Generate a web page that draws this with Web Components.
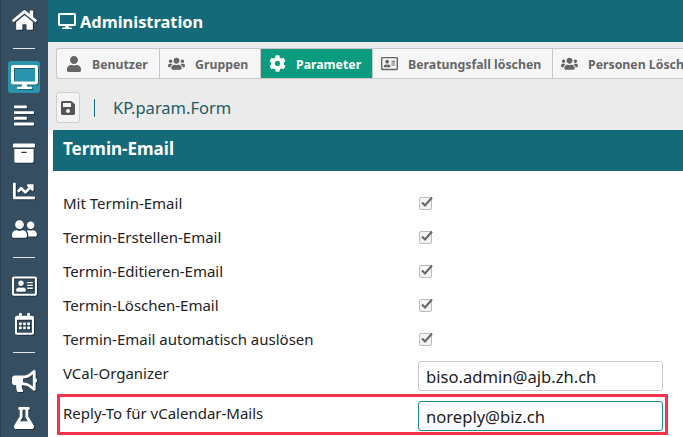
<!DOCTYPE html>
<html lang="de">
<head>
<meta charset="utf-8">
<title>Administration</title>
<style>
  html, body { margin: 0; height: 100%; overflow: hidden; background: #fff; }
  body { font-family: "Noto Sans", "Open Sans", sans-serif; }
</style>
</head>
<body>
<app-shell>
  <side-bar slot="side">
    <side-icon name="home" size="25" h="40"></side-icon>
    <side-sep style="margin-top: 8px"></side-sep>
    <side-icon name="desktop" size="27" h="32" active></side-icon>
    <side-icon name="align" size="20" h="44"></side-icon>
    <side-icon name="archive" size="22" h="32"></side-icon>
    <side-icon name="chart" size="22" h="43"></side-icon>
    <side-icon name="friends" size="25" h="33"></side-icon>
    <side-sep style="margin-top: 12px"></side-sep>
    <side-icon name="card" size="25" h="32"></side-icon>
    <side-icon name="calendar" size="19" h="44"></side-icon>
    <side-sep style="margin-top: 6px"></side-sep>
    <side-icon name="bullhorn" size="25" h="32"></side-icon>
    <side-icon name="flask" size="20" h="42"></side-icon>
  </side-bar>

  <top-head>Administration</top-head>

  <tab-bar>
    <tab-item icon="user" w="103">Benutzer</tab-item>
    <tab-item icon="users" w="101">Gruppen</tab-item>
    <tab-item icon="cog" w="112" active>Parameter</tab-item>
    <tab-item icon="card" w="180">Beratungsfall löschen</tab-item>
    <tab-item icon="users" w="180">Personen Löschen</tab-item>
  </tab-bar>

  <form-tools>KP.param.Form</form-tools>

  <form-section title="Termin-Email">
    <form-row label="Mit Termin-Email" checked></form-row>
    <form-row label="Termin-Erstellen-Email" checked></form-row>
    <form-row label="Termin-Editieren-Email" checked></form-row>
    <form-row label="Termin-Löschen-Email" checked></form-row>
    <form-row label="Termin-Email automatisch auslösen" checked></form-row>
    <form-row label="VCal-Organizer" value="biso.admin@ajb.zh.ch"></form-row>
    <form-row label="Reply-To für vCalendar-Mails" value="noreply@biz.ch" marked></form-row>
  </form-section>
</app-shell>

<script>
const ICONS = {
  home: [576, 'M280.37 148.26L96 300.11V464a16 16 0 0 0 16 16l112.06-.29a16 16 0 0 0 15.92-16V368a16 16 0 0 1 16-16h64a16 16 0 0 1 16 16v95.64a16 16 0 0 0 16 16.05L464 480a16 16 0 0 0 16-16V300L295.67 148.26a12.19 12.19 0 0 0-15.3 0zM571.6 251.47L488 182.56V44.05a12 12 0 0 0-12-12h-56a12 12 0 0 0-12 12v72.61L318.47 43a48 48 0 0 0-61 0L4.34 251.47a12 12 0 0 0-1.6 16.9l25.5 31A12 12 0 0 0 45.15 301l235.22-193.74a12.19 12.19 0 0 1 15.3 0L530.9 301a12 12 0 0 0 16.9-1.6l25.5-31a12 12 0 0 0-1.7-16.93z'],
  desktop: [576, 'M528 0H48C21.5 0 0 21.5 0 48v320c0 26.5 21.5 48 48 48h192l-16 48h-72c-13.3 0-24 10.7-24 24s10.7 24 24 24h272c13.3 0 24-10.7 24-24s-10.7-24-24-24h-72l-16-48h192c26.5 0 48-21.5 48-48V48c0-26.5-21.5-48-48-48zm-16 352H64V64h448v288z'],
  align: [448, 'M12.83 352h262.34A12.82 12.82 0 0 0 288 339.17v-38.34A12.82 12.82 0 0 0 275.17 288H12.83A12.82 12.82 0 0 0 0 300.83v38.34A12.82 12.82 0 0 0 12.83 352zm0-256h262.34A12.82 12.82 0 0 0 288 83.17V44.83A12.82 12.82 0 0 0 275.17 32H12.83A12.82 12.82 0 0 0 0 44.83v38.34A12.82 12.82 0 0 0 12.83 96zM432 160H16a16 16 0 0 0-16 16v32a16 16 0 0 0 16 16h416a16 16 0 0 0 16-16v-32a16 16 0 0 0-16-16zm0 256H16a16 16 0 0 0-16 16v32a16 16 0 0 0 16 16h416a16 16 0 0 0 16-16v-32a16 16 0 0 0-16-16z'],
  archive: [512, 'M32 448c0 17.7 14.3 32 32 32h384c17.7 0 32-14.3 32-32V160H32v288zm160-212c0-6.6 5.4-12 12-12h104c6.6 0 12 5.4 12 12v8c0 6.6-5.4 12-12 12H204c-6.6 0-12-5.4-12-12v-8zM480 32H32C14.3 32 0 46.3 0 64v48c0 8.8 7.2 16 16 16h480c8.8 0 16-7.2 16-16V64c0-17.7-14.3-32-32-32z'],
  chart: [512, 'M496 384H64V80c0-8.84-7.16-16-16-16H16C7.16 64 0 71.16 0 80v336c0 17.67 14.33 32 32 32h464c8.84 0 16-7.16 16-16v-32c0-8.84-7.16-16-16-16zM464 96H345.94c-21.38 0-32.09 25.85-16.97 40.97l32.4 32.4L288 242.75l-73.37-73.37c-12.5-12.5-32.76-12.5-45.25 0l-68.69 68.69c-6.25 6.25-6.25 16.38 0 22.63l22.62 22.62c6.25 6.25 16.38 6.25 22.63 0L192 237.25l73.37 73.37c12.5 12.5 32.76 12.5 45.25 0l96-96 32.4 32.4c15.12 15.12 40.97 4.41 40.97-16.97V112c.01-8.84-7.15-16-15.99-16z'],
  friends: [640, 'M192 256c61.9 0 112-50.1 112-112S253.9 32 192 32 80 82.1 80 144s50.1 112 112 112zm76.8 32h-8.3c-20.8 10-43.9 16-68.5 16s-47.6-6-68.5-16h-8.3C51.6 288 0 339.6 0 403.2V432c0 26.5 21.5 48 48 48h288c26.5 0 48-21.5 48-48v-28.8c0-63.6-51.6-115.2-115.2-115.2zM480 256c53 0 96-43 96-96s-43-96-96-96-96 43-96 96 43 96 96 96zm48 32h-3.8c-13.9 4.8-28.6 8-44.2 8s-30.3-3.2-44.2-8H432c-20.4 0-39.2 5.9-55.7 15.4 24.4 26.3 39.7 61.2 39.7 99.8v38.4c0 2.2-.5 4.3-.6 6.4H592c26.5 0 48-21.5 48-48 0-61.9-50.1-112-112-112z'],
  card: [576, 'M528 32H48C21.5 32 0 53.5 0 80v352c0 26.5 21.5 48 48 48h480c26.5 0 48-21.5 48-48V80c0-26.5-21.5-48-48-48zm-6 400H54c-3.3 0-6-2.7-6-6V86c0-3.3 2.7-6 6-6h468c3.3 0 6 2.7 6 6v340c0 3.3-2.7 6-6 6zM208 256c35.3 0 64-28.7 64-64s-28.7-64-64-64-64 28.7-64 64 28.7 64 64 64zm-89.6 128h179.2c12.4 0 22.4-8.6 22.4-19.2v-19.2c0-31.8-30.1-57.6-67.2-57.6-10.8 0-18.7 8-44.8 8-26.9 0-33.4-8-44.8-8-37.1 0-67.2 25.8-67.2 57.6v19.2c0 10.6 10 19.2 22.4 19.2zM360 320h112c4.4 0 8-3.6 8-8v-16c0-4.4-3.6-8-8-8H360c-4.4 0-8 3.6-8 8v16c0 4.4 3.6 8 8 8zm0-64h112c4.4 0 8-3.6 8-8v-16c0-4.4-3.6-8-8-8H360c-4.4 0-8 3.6-8 8v16c0 4.4 3.6 8 8 8zm0-64h112c4.4 0 8-3.6 8-8v-16c0-4.4-3.6-8-8-8H360c-4.4 0-8 3.6-8 8v16c0 4.4 3.6 8 8 8z'],
  calendar: [448, 'M148 288h-40c-6.6 0-12-5.4-12-12v-40c0-6.6 5.4-12 12-12h40c6.6 0 12 5.4 12 12v40c0 6.6-5.4 12-12 12zm108-12v-40c0-6.6-5.4-12-12-12h-40c-6.6 0-12 5.4-12 12v40c0 6.6 5.4 12 12 12h40c6.6 0 12-5.4 12-12zm96 0v-40c0-6.6-5.4-12-12-12h-40c-6.6 0-12 5.4-12 12v40c0 6.6 5.4 12 12 12h40c6.6 0 12-5.4 12-12zm-96 96v-40c0-6.6-5.4-12-12-12h-40c-6.6 0-12 5.4-12 12v40c0 6.6 5.4 12 12 12h40c6.6 0 12-5.4 12-12zm-96 0v-40c0-6.6-5.4-12-12-12h-40c-6.6 0-12 5.4-12 12v40c0 6.6 5.4 12 12 12h40c6.6 0 12-5.4 12-12zm192 0v-40c0-6.6-5.4-12-12-12h-40c-6.6 0-12 5.4-12 12v40c0 6.6 5.4 12 12 12h40c6.6 0 12-5.4 12-12zm96-260v352c0 26.5-21.5 48-48 48H48c-26.5 0-48-21.5-48-48V112c0-26.5 21.5-48 48-48h48V12c0-6.6 5.4-12 12-12h40c6.6 0 12 5.4 12 12v52h128V12c0-6.6 5.4-12 12-12h40c6.6 0 12 5.4 12 12v52h48c26.5 0 48 21.5 48 48zm-48 346V160H48v298c0 3.3 2.7 6 6 6h340c3.3 0 6-2.7 6-6z'],
  bullhorn: [576, 'M576 240c0-23.63-12.95-44.04-32-55.12V32.01C544 23.26 537.02 0 512 0c-7.12 0-14.19 2.38-19.98 7.02l-85.03 68.03C364.28 109.19 310.66 128 256 128H64c-35.35 0-64 28.65-64 64v96c0 35.35 28.65 64 64 64h33.7c-1.39 10.48-2.18 21.14-2.18 32 0 39.77 9.26 77.35 25.56 110.94 5.19 10.69 16.52 17.06 28.4 17.06h74.28c26.05 0 41.69-29.84 25.9-50.56-16.4-21.52-26.15-48.36-26.15-77.44 0-11.11 1.62-21.79 4.41-32H256c54.66 0 108.28 18.81 150.98 52.95l85.03 68.03a32.023 32.023 0 0 0 19.98 7.02c24.92 0 32-22.78 32-32V295.13C563.05 284.04 576 263.63 576 240zm-96 141.42l-33.05-26.44C392.95 311.78 325.12 288 256 288V192c69.12 0 136.95-23.78 190.95-66.98L480 98.58v282.84z'],
  flask: [448, 'M437.2 403.5L320 215V64h8c13.3 0 24-10.7 24-24V24c0-13.3-10.7-24-24-24H120c-13.3 0-24 10.7-24 24v16c0 13.3 10.7 24 24 24h8v151L10.8 403.5C-18.5 450.6 15.3 512 70.9 512h306.2c55.7 0 89.4-61.5 60.1-108.5zM137.9 320l48.2-77.6c3.7-5.2 5.8-11.6 5.8-18.4V64h64v160c0 6.9 2.2 13.2 5.8 18.4l48.2 77.6h-172z'],
  user: [448, 'M224 256c70.7 0 128-57.3 128-128S294.7 0 224 0 96 57.3 96 128s57.3 128 128 128zm89.6 32h-16.7c-22.2 10.2-46.9 16-72.9 16s-50.6-5.8-72.9-16h-16.7C60.2 288 0 348.2 0 422.4V464c0 26.5 21.5 48 48 48h352c26.5 0 48-21.5 48-48v-41.6c0-74.2-60.2-134.4-134.4-134.4z'],
  users: [640, 'M96 224c35.3 0 64-28.7 64-64s-28.7-64-64-64-64 28.7-64 64 28.7 64 64 64zm448 0c35.3 0 64-28.7 64-64s-28.7-64-64-64-64 28.7-64 64 28.7 64 64 64zm32 32h-64c-17.6 0-33.5 7.1-45.1 18.6 40.3 22.1 68.9 62 75.1 109.4h66c17.7 0 32-14.3 32-32v-32c0-35.3-28.7-64-64-64zm-256 0c61.9 0 112-50.1 112-112S381.9 32 320 32 208 82.1 208 144s50.1 112 112 112zm76.8 32h-8.3c-20.8 10-43.9 16-68.5 16s-47.6-6-68.5-16h-8.3C179.6 288 128 339.6 128 403.2V432c0 26.5 21.5 48 48 48h288c26.5 0 48-21.5 48-48v-28.8c0-63.6-51.6-115.2-115.2-115.2zm-223.7-13.4C161.5 263.1 145.6 256 128 256H64c-35.3 0-64 28.7-64 64v32c0 17.7 14.3 32 32 32h65.9c6.3-47.4 34.9-87.3 75.2-109.4z'],
  cog: [512, 'M487.4 315.7l-42.6-24.6c4.3-23.2 4.3-47 0-70.2l42.6-24.6c4.9-2.8 7.1-8.6 5.5-14-11.1-35.6-30-67.8-54.7-94.6-3.8-4.1-10-5.1-14.8-2.3L380.8 110c-17.9-15.4-38.5-27.3-60.8-35.1V25.8c0-5.6-3.9-10.5-9.4-11.7-36.7-8.2-74.3-7.8-109.2 0-5.5 1.2-9.4 6.1-9.4 11.7V75c-22.2 7.9-42.8 19.8-60.8 35.1L88.7 85.5c-4.9-2.8-11-1.9-14.8 2.3-24.7 26.7-43.6 58.9-54.7 94.6-1.7 5.4.6 11.2 5.5 14L67.3 221c-4.3 23.2-4.3 47 0 70.2l-42.6 24.6c-4.9 2.8-7.1 8.6-5.5 14 11.1 35.6 30 67.8 54.7 94.6 3.8 4.1 10 5.1 14.8 2.3l42.6-24.6c17.9 15.4 38.5 27.3 60.8 35.1v49.2c0 5.6 3.9 10.5 9.4 11.7 36.7 8.2 74.3 7.8 109.2 0 5.5-1.2 9.4-6.1 9.4-11.7v-49.2c22.2-7.9 42.8-19.8 60.8-35.1l42.6 24.6c4.9 2.8 11 1.9 14.8-2.3 24.7-26.7 43.6-58.9 54.7-94.6 1.5-5.5-.7-11.3-5.6-14.1zM256 336c-44.1 0-80-35.9-80-80s35.9-80 80-80 80 35.9 80 80-35.9 80-80 80z'],
  save: [448, 'M433.941 129.941l-83.882-83.882A48 48 0 0 0 316.118 32H48C21.49 32 0 53.49 0 80v352c0 26.51 21.49 48 48 48h352c26.51 0 48-21.49 48-48V163.882a48 48 0 0 0-14.059-33.941zM224 416c-35.346 0-64-28.654-64-64 0-35.346 28.654-64 64-64s64 28.654 64 64c0 35.346-28.654 64-64 64zm96-304.52V212c0 6.627-5.373 12-12 12H76c-6.627 0-12-5.373-12-12V108c0-6.627 5.373-12 12-12h228.52c3.183 0 6.235 1.264 8.485 3.515l3.48 3.48A11.996 11.996 0 0 1 320 111.48z']
};

function svgIcon(name, size) {
  const [w, d] = ICONS[name];
  return `<svg width="${size}" height="${size * 512 / w}" viewBox="0 0 ${w} 512" fill="currentColor"><path d="${d}"/></svg>`;
}

class Base extends HTMLElement {
  constructor(html) {
    super();
    this.attachShadow({ mode: 'open' });
    if (html) this.shadowRoot.innerHTML = html;
  }
}

class AppShell extends Base {
  constructor() {
    super(`<style>
      :host { display: grid; grid-template-columns: 48px 1fr; width: 683px; height: 437px; overflow: hidden; }
      main { display: flex; flex-direction: column; min-width: 0; height: 437px; overflow: hidden; }
    </style>
    <div><slot name="side"></slot></div>
    <main><slot></slot></main>`);
  }
}

class SideBar extends Base {
  constructor() {
    super(`<style>
      :host { display: flex; flex-direction: column; align-items: center; box-sizing: border-box;
        width: 48px; height: 437px; background: #354e62; border-left: 1px solid #2c4253; }
    </style><slot></slot>`);
  }
}

class SideIcon extends Base {
  connectedCallback() {
    const size = +this.getAttribute('size');
    const h = this.getAttribute('h');
    this.shadowRoot.innerHTML = `<style>
      :host { display: flex; flex: none; align-items: center; justify-content: center; height: ${h}px; width: 32px;
        margin-left: -1px; color: #fff; border-radius: 3px; }
      :host([active]) { background: #2a93ad; }
      svg { display: block; filter: drop-shadow(1px 1px 0 rgba(0,0,0,.35)); }
    </style>${svgIcon(this.getAttribute('name'), size)}`;
  }
}

class SideSep extends Base {
  constructor() {
    super(`<style>
      :host { display: block; flex: none; width: 22px; height: 1px; background: #dfe5ea; margin: 0 0 12px -1px; }
    </style>`);
  }
}

class TopHead extends Base {
  constructor() {
    super(`<style>
      :host { display: flex; flex: none; align-items: center; gap: 4px; height: 42px; box-sizing: border-box;
        padding: 0 0 0 10px; background: #146a79; color: #fff; font-size: 16.4px; font-weight: 700; }
      svg { display: block; }
    </style>${svgIcon('desktop', 18)}<slot></slot>`);
  }
}

class TabBar extends Base {
  constructor() {
    super(`<style>
      :host { display: flex; flex: none; box-sizing: border-box; background: #ebebeb; padding: 6px 0 0 8px; height: 37px; overflow: hidden; }
      .wrap { display: flex; flex: none; height: 31px; box-sizing: border-box; border: 1px solid #c8c8c8;
        border-right: 0; border-radius: 3px 0 0 3px; background: #f6f6f6; }
    </style><div class="wrap"><slot></slot></div>`);
  }
}

class TabItem extends Base {
  connectedCallback() {
    this.shadowRoot.innerHTML = `<style>
      :host { display: flex; flex: none; align-items: center; box-sizing: border-box; width: ${this.getAttribute('w')}px;
        border-right: 1px solid #c8c8c8; color: #666; font-size: 12.3px; font-weight: 700; white-space: nowrap; }
      :host([active]) { background: #0b9b7e; color: #fff; }
      .ic { flex: none; width: 35px; display: flex; justify-content: center; padding-right: 2px; box-sizing: border-box; }
      .txt { padding-top: 1px; }
      svg { display: block; }
    </style><span class="ic">${svgIcon(this.getAttribute('icon'), this.getAttribute('icon') === 'user' ? 14 : 17)}</span><span class="txt"><slot></slot></span>`;
  }
}

class FormTools extends Base {
  constructor() {
    super(`<style>
      :host { display: flex; flex: none; align-items: center; height: 51px; box-sizing: border-box;
        background: #ebebeb; padding: 13px 0 7px 8px; color: #1d5a62; font-size: 16.5px; }
      button { display: flex; align-items: center; justify-content: center; width: 24px; height: 31px; padding: 0;
        border: 1px solid #cfcfcf; border-radius: 3px; background: #f4f4f4; color: #555; }
      svg { display: block; }
      .bar { width: 1px; height: 18px; background: #146a79; margin: 0 18px 0 14px; }
    </style><button aria-label="Speichern">${svgIcon('save', 14)}</button><span class="bar"></span><slot></slot>`);
  }
}

class FormSection extends Base {
  connectedCallback() {
    this.shadowRoot.innerHTML = `<style>
      :host { display: block; flex: 1; margin-left: 5px; min-height: 0; }
      h2 { margin: 0; height: 41px; box-sizing: border-box; padding-left: 10px; background: #146a79; color: #fff;
        font-size: 17px; font-weight: 700; line-height: 38px; }
      .rows { padding-top: 15px; }
    </style><h2>${this.getAttribute('title')}</h2><div class="rows"><slot></slot></div>`;
  }
}

class FormRow extends Base {
  connectedCallback() {
    const value = this.getAttribute('value');
    const control = value !== null
      ? `<span class="input">${value}</span>`
      : `<span class="box"><svg width="15" height="15" viewBox="0 0 15 15"><path d="M3 7.5l3 3L13 2.5" fill="none" stroke="#666" stroke-width="2"/></svg></span>`;
    this.shadowRoot.innerHTML = `<style>
      :host { display: grid; grid-template-columns: 355px 245px; align-items: center; height: 34px;
        padding-left: 10px; color: #222; font-size: 15px; }
      .label { white-space: nowrap; }
      .box { display: block; width: 13px; height: 13px; margin-left: 1px; box-sizing: border-box; border: 1px solid #bbb;
        border-radius: 2px; background: #f4f4f4; position: relative; }
      .box svg { position: absolute; left: -1px; top: -3px; }
      .input { display: block; box-sizing: border-box; height: 30px; line-height: 30px; padding-left: 7px; border: 1px solid #ccc;
        border-radius: 3px; font-size: 16.6px; color: #222; background: #fff; white-space: nowrap; margin-top: 2px; }
      :host([value]) { height: 38px; }
      :host([value]) .label { transform: translateY(-2px); }
      :host([marked]) { margin-left: 4px; width: 611px; height: 41px; box-sizing: border-box; padding-left: 6px;
        outline: 3px solid #f5334a; outline-offset: -3px; }
      :host([marked]) .input { border-color: #1b8d86; margin-top: 3px; }
    </style><span class="label">${this.getAttribute('label')}</span>${control}`;
  }
}

customElements.define('app-shell', AppShell);
customElements.define('side-bar', SideBar);
customElements.define('side-icon', SideIcon);
customElements.define('side-sep', SideSep);
customElements.define('top-head', TopHead);
customElements.define('tab-bar', TabBar);
customElements.define('tab-item', TabItem);
customElements.define('form-tools', FormTools);
customElements.define('form-section', FormSection);
customElements.define('form-row', FormRow);
</script>
</body>
</html>
